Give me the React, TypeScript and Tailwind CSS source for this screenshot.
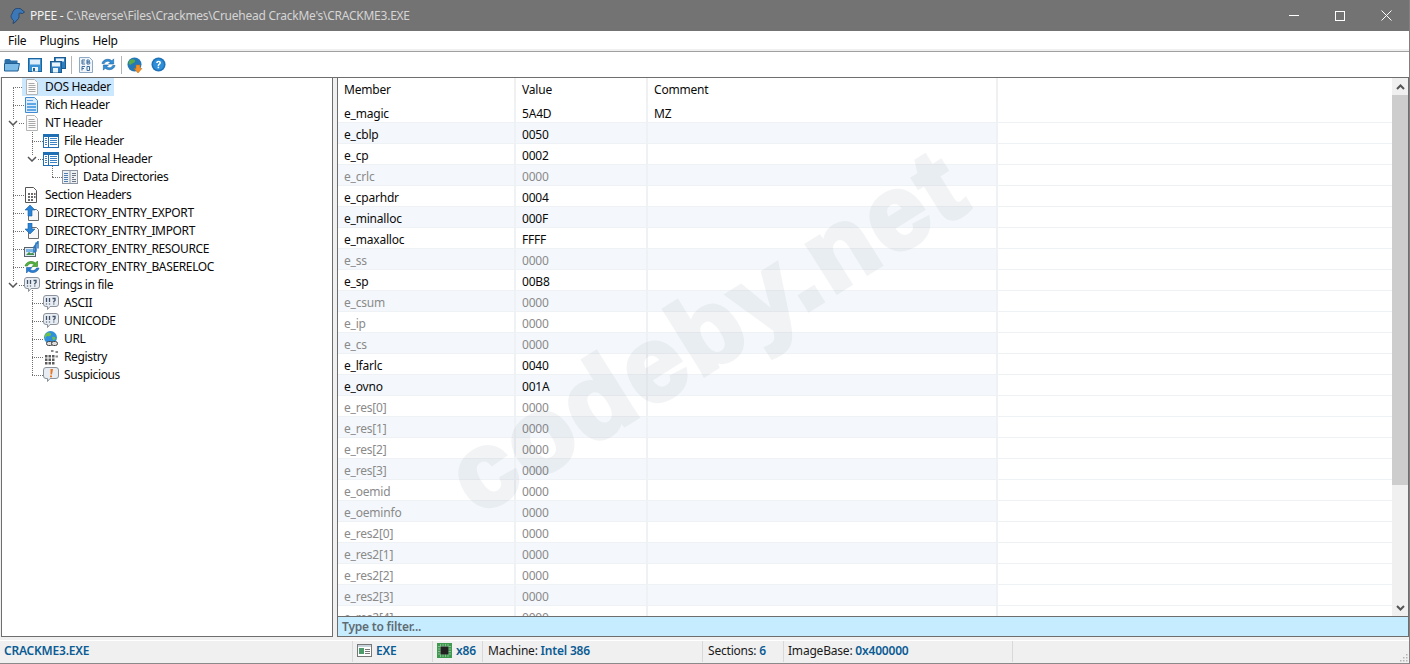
import type { ReactNode } from "react";

const font = "font-['Noto_Sans','Open_Sans',sans-serif]";

type IconName =
  | "page" | "rich" | "table" | "dirs" | "section" | "export" | "import"
  | "resource" | "reloc" | "strings" | "url" | "registry" | "suspicious";

const TreeIcon = ({ name }: { name: IconName }) => {
  switch (name) {
    case "page":
      return (
        <svg width="16" height="16" viewBox="0 0 16 16">
          <path d="M2.500.5h8l3 3v12h-11z" fill="#fbfbfb" stroke="#b4b4b4" />
          <path d="M4.500 4.500h6M4.500 6.500h7M4.500 8.500h7M4.500 10.500h7M4.500 12.500h7" stroke="#a9a9a9" />
        </svg>
      );
    case "rich":
      return (
        <svg width="16" height="16" viewBox="0 0 16 16">
          <path d="M1.500.5h9l3 3v12h-12z" fill="#dcecfa" stroke="#3f8ad0" />
          <path d="M3 6h9v2H3zM3 9h9v2H3zM3 12h9v2H3z" fill="#5ea6e4" />
          <path d="M3 3.500h6" stroke="#5ea6e4" />
        </svg>
      );
    case "table":
      return (
        <svg width="16" height="16" viewBox="0 0 16 16">
          <rect x=".5" y="1.500" width="15" height="13" fill="#fff" stroke="#1f6fb5" />
          <path d="M.5 3h15" stroke="#1f6fb5" strokeWidth="2" />
          <path d="M5.500 2v12" stroke="#1f6fb5" />
          <path d="M2 5.500h2M2 7.500h2M2 9.500h2M2 11.500h2M7 5.500h7M7 7.500h7M7 9.500h7M7 11.500h7" stroke="#3b83c4" />
        </svg>
      );
    case "dirs":
      return (
        <svg width="16" height="16" viewBox="0 0 16 16">
          <rect x=".5" y="1.500" width="15" height="13" fill="#eef1f4" stroke="#8d97a3" />
          <path d="M8 2v12" stroke="#8d97a3" />
          <path d="M2 4.500h4M2 6.500h4M2 8.500h4M2 10.500h4M2 12.500h4" stroke="#4e7fb0" />
          <path d="M10 4.500h4M10 6.500h4M10 8.500h2M10 10.500h4M10 12.500h4" stroke="#6b7480" />
        </svg>
      );
    case "section":
      return (
        <svg width="16" height="16" viewBox="0 0 16 16">
          <path d="M1.500.5h8l3 3v12h-11z" fill="#fff" stroke="#555" />
          <path d="M4 6h2v2H4zM7 6h2v2H7zM10 6h1.500v2H10zM4 9h2v2H4zM7 9h2v2H7zM10 9h1.500v2H10zM4 12h2v2H4zM7 12h2v2H7z" fill="#6a6a6a" />
        </svg>
      );
    case "export":
    case "import":
      return (
        <svg width="16" height="16" viewBox="0 0 16 16">
          <path d="M4.500 4.500h8l2 2v9h-10z" fill="#f7f7f7" stroke="#6d6d6d" />
          <path
            d={name === "export" ? "M6 0 1 5h3v6h4V5h3z" : "M4 0h4v6h3l-5 5-5-5h3z"}
            fill="#2b83d6"
            stroke="#1a5fa3"
            strokeWidth=".6"
          />
        </svg>
      );
    case "resource":
      return (
        <svg width="16" height="16" viewBox="0 0 16 16">
          <rect x=".5" y="6.500" width="11" height="9" fill="#dfeaf3" stroke="#58636e" />
          <rect x="2" y="8" width="8" height="3" fill="#7fb6e6" />
          <path d="M2 14l3-3 2 1.500 1.500-1 1.500 1.500v1z" fill="#3f8f4d" />
          <path d="M12 1.500v8.500l-2 1V6l4-5.500v7" fill="none" stroke="#2b78c2" strokeWidth="1.500" />
        </svg>
      );
    case "reloc":
      return (
        <svg width="16" height="16" viewBox="0 0 16 16">
          <path d="M1 7C2 2.500 8 1 11.500 4L13.500 2v5.500H8l2-2C7.500 3.800 4.500 4.500 3.500 7z" fill="#53b13d" stroke="#2f7c22" strokeWidth=".6" />
          <path d="M15 9c-1 4.500-7 6-10.500 3L2.500 14V8.500H8l-2 2c2.500 1.700 5.500 1 6.500-1.500z" fill="#2a7fd4" stroke="#185a9e" strokeWidth=".6" />
        </svg>
      );
    case "strings":
      return (
        <svg width="16" height="16" viewBox="0 0 16 16">
          <path d="M3 .5h10a2.500 2.500 0 0 1 2.500 2.500v6a2.500 2.500 0 0 1-2.500 2.500H7l-2.500 3v-3H3A2.500 2.500 0 0 1 .5 9V3A2.500 2.500 0 0 1 3 .5z" fill="#e8edf3" stroke="#8b929b" />
          <path d="M3.500 3v4M6.500 3v4M3.500 8.500v1M6.500 8.500v1M9.500 3.500h2.500v2l-1.200 1v1M10.800 8.500v1" fill="none" stroke="#3f5068" strokeWidth="1.300" />
        </svg>
      );
    case "url":
      return (
        <svg width="16" height="16" viewBox="0 0 16 16">
          <circle cx="7.500" cy="6.500" r="6.500" fill="#2f8fdc" />
          <path d="M4 2c2-1 4 0 4 1.500S6 5.500 5 5 2 6 2.500 8C1 6 2 3 4 2zM9 6c2-.5 4 0 3.500 2L10 9.500z" fill="#6dc04a" />
          <rect x="3.500" y="10.500" width="6" height="4" rx="2" fill="#ddd" stroke="#444" />
          <rect x="8.500" y="10.500" width="6" height="4" rx="2" fill="#ddd" stroke="#444" />
        </svg>
      );
    case "registry":
      return (
        <svg width="16" height="16" viewBox="0 0 16 16">
          <path d="M2 6h2.500v2.500H2zM5.500 6H8v2.500H5.500zM9 6h2.500v2.500H9zM2 9.500h2.500V12H2zM5.500 9.500H8V12H5.500zM9 9.500h2.500V12H9zM2 13h2.500v2.500H2zM5.500 13H8v2.500H5.500zM9 13h2.500v2.500H9z" fill="#5d5d5d" />
          <path d="M8 1h2.500v2H8zM12.500 2H15v2h-2.500zM12.500 6.500H15v2h-2.500z" fill="#8b8b8b" />
        </svg>
      );
    case "suspicious":
      return (
        <svg width="16" height="16" viewBox="0 0 16 16">
          <path d="M3 .5h10a2.500 2.500 0 0 1 2.500 2.500v6a2.500 2.500 0 0 1-2.500 2.500H7l-2.500 3v-3H3A2.500 2.500 0 0 1 .5 9V3A2.500 2.500 0 0 1 3 .5z" fill="#e8edf3" stroke="#8b929b" />
          <path d="M7.500 2h2.500L9 7.500H7.500zM7 8.500h2v1.800H7z" fill="#e8761e" />
        </svg>
      );
  }
};

type TreeItem = { label: string; icon: IconName; depth: number; open?: boolean };

const treeItems: TreeItem[] = [
  { label: "DOS Header", icon: "page", depth: 0 },
  { label: "Rich Header", icon: "rich", depth: 0 },
  { label: "NT Header", icon: "page", depth: 0, open: true },
  { label: "File Header", icon: "table", depth: 1 },
  { label: "Optional Header", icon: "table", depth: 1, open: true },
  { label: "Data Directories", icon: "dirs", depth: 2 },
  { label: "Section Headers", icon: "section", depth: 0 },
  { label: "DIRECTORY_ENTRY_EXPORT", icon: "export", depth: 0 },
  { label: "DIRECTORY_ENTRY_IMPORT", icon: "import", depth: 0 },
  { label: "DIRECTORY_ENTRY_RESOURCE", icon: "resource", depth: 0 },
  { label: "DIRECTORY_ENTRY_BASERELOC", icon: "reloc", depth: 0 },
  { label: "Strings in file", icon: "strings", depth: 0, open: true },
  { label: "ASCII", icon: "strings", depth: 1 },
  { label: "UNICODE", icon: "strings", depth: 1 },
  { label: "URL", icon: "url", depth: 1 },
  { label: "Registry", icon: "registry", depth: 1 },
  { label: "Suspicious", icon: "suspicious", depth: 1 },
];

const rows: [string, string, boolean][] = [
  ["e_magic", "5A4D", true],
  ["e_cblp", "0050", true],
  ["e_cp", "0002", true],
  ["e_crlc", "0000", false],
  ["e_cparhdr", "0004", true],
  ["e_minalloc", "000F", true],
  ["e_maxalloc", "FFFF", true],
  ["e_ss", "0000", false],
  ["e_sp", "00B8", true],
  ["e_csum", "0000", false],
  ["e_ip", "0000", false],
  ["e_cs", "0000", false],
  ["e_lfarlc", "0040", true],
  ["e_ovno", "001A", true],
  ["e_res[0]", "0000", false],
  ["e_res[1]", "0000", false],
  ["e_res[2]", "0000", false],
  ["e_res[3]", "0000", false],
  ["e_oemid", "0000", false],
  ["e_oeminfo", "0000", false],
  ["e_res2[0]", "0000", false],
  ["e_res2[1]", "0000", false],
  ["e_res2[2]", "0000", false],
  ["e_res2[3]", "0000", false],
  ["e_res2[4]", "0000", false],
];

const ToolButton = ({ className, children }: { className: string; children: ReactNode }) => (
  <div className={`h-[24px] flex items-center justify-center ${className}`}>{children}</div>
);

const Toolbar = () => (
  <div className="h-[25px] bg-white flex items-center pl-[1px] shrink-0">
    <ToolButton className="w-[22px]">
      <svg width="16" height="14" viewBox="0 0 16 14">
        <path d="M.5 2.500Q.5 1 2 1h3.500L7 2.500h6.500V5H.5z" fill="#2a6fa8" />
        <path d="M.5 13V5.500h15L14 13z" fill="#7dbce6" stroke="#1f5f94" />
      </svg>
    </ToolButton>
    <ToolButton className="w-[23px]">
      <svg width="14" height="14" viewBox="0 0 14 14">
        <rect x=".5" y=".5" width="13" height="13" fill="#3a93d4" stroke="#1d639c" />
        <rect x="2" y="1.500" width="10" height="5" fill="#dcecf8" />
        <rect x="4" y="9" width="6" height="4.500" fill="#eef5fa" />
        <rect x="5" y="10" width="2" height="3" fill="#1d639c" />
      </svg>
    </ToolButton>
    <ToolButton className="w-[24px]">
      <svg width="16" height="16" viewBox="0 0 16 16">
        <rect x="4.500" y=".5" width="11" height="11" fill="#2f7fc0" stroke="#1d5a8e" />
        <rect x="6" y="1.500" width="8" height="3" fill="#e9f3fa" />
        <rect x=".5" y="4.500" width="11" height="11" fill="#2f7fc0" stroke="#1d5a8e" />
        <rect x="2" y="5.500" width="8" height="4" fill="#e9f3fa" />
        <rect x="3" y="11" width="5" height="4.500" fill="#e9f3fa" />
      </svg>
    </ToolButton>
    <div className="w-px h-[18px] bg-[#b5b5b5] ml-[1px] mr-[2px]" />
    <ToolButton className="w-[23px]">
      <svg width="14" height="16" viewBox="0 0 14 16">
        <path d="M.5.5h10l3 3v12H.5z" fill="#f0f5fa" stroke="#8faac4" />
        <path d="M3 3h3M3 3v4M3 5h2.500M3 7h3M8 3v4h2a1 1 0 0 0 0-2H8h1.500a1 1 0 0 0 0-2zM3 9.500v4M3 9.500h3M3 11.500h2M8 9.500h2.500v4H8z" fill="none" stroke="#3e6f9e" />
      </svg>
    </ToolButton>
    <ToolButton className="w-[23px]">
      <svg width="15" height="15" viewBox="0 0 16 16">
        <path d="M1 7C2 2.500 8 1 11.500 4L13.500 2v5.500H8l2-2C7.500 3.800 4.500 4.500 3.500 7z" fill="#2f8fd8" stroke="#1b5e9c" strokeWidth=".6" />
        <path d="M15 9c-1 4.500-7 6-10.500 3L2.500 14V8.500H8l-2 2c2.500 1.700 5.500 1 6.500-1.500z" fill="#2f8fd8" stroke="#1b5e9c" strokeWidth=".6" />
      </svg>
    </ToolButton>
    <div className="w-px h-[18px] bg-[#b5b5b5] ml-[1px] mr-[1px]" />
    <ToolButton className="w-[23px]">
      <svg width="16" height="16" viewBox="0 0 16 16">
        <circle cx="7.500" cy="7.500" r="7" fill="#2478b8" />
        <path d="M3 3c2-1.500 5-1 5 1S5 6 4.500 7 2.500 8 2 7C1.500 6 2 4 3 3z" fill="#58a94a" />
        <path d="M9 8h4v3.500h2L11 16l-4-4.500h2z" fill="#f0902a" stroke="#c06a15" strokeWidth=".5" />
      </svg>
    </ToolButton>
    <ToolButton className="w-[24px]">
      <svg width="15" height="15" viewBox="0 0 16 16">
        <circle cx="8" cy="8" r="7.500" fill="#1f72b8" />
        <circle cx="8" cy="8" r="5.800" fill="#2f8fd8" />
        <path d="M5.500 6.300C5.500 4.800 6.700 4 8.100 4c1.500 0 2.500.9 2.500 2.100 0 1.800-2 1.800-2 3.400H7c0-2.400 1.900-2.300 1.900-3.400 0-.5-.3-.8-.8-.8-.6 0-.9.4-.9 1z" fill="#fff" />
        <rect x="7" y="10.300" width="1.700" height="1.700" fill="#fff" />
      </svg>
    </ToolButton>
  </div>
);

const TreeRow = ({ item, index }: { item: TreeItem; index: number }) => {
  const indent = item.depth === 0 ? "pl-[20px]" : item.depth === 1 ? "pl-[39px]" : "pl-[58px]";
  const chevron = item.depth === 0 ? "left-[6px]" : "left-[25px]";
  const dots = item.depth === 0 ? "left-[11px] w-[11px]" : item.depth === 1 ? "left-[30px] w-[11px]" : "left-[50px] w-[10px]";
  return (
    <div className={`relative h-[18px] flex items-center ${indent}`}>
      <div className={`absolute top-[9px] h-px border-t border-dotted border-[#707070] ${dots}`} />
      {item.open && (
        <svg className={`absolute top-[6px] ${chevron} bg-white`} width="10" height="6" viewBox="0 0 10 6">
          <path d="M1 1l4 4 4-4" fill="none" stroke="#555" strokeWidth="1.500" />
        </svg>
      )}
      <div className={`relative h-[18px] flex items-center pl-[2px] pr-[3px] ${index === 0 ? "bg-[#cce8ff]" : ""}`}>
        <div className="shrink-0 w-[16px] h-[16px]">
          <TreeIcon name={item.icon} />
        </div>
        <span className="ml-[5px] leading-[18px] whitespace-nowrap tracking-[-0.35px] text-[#0a0a0a]">{item.label}</span>
      </div>
    </div>
  );
};

const Tree = () => (
  <div className="relative w-[332px] shrink-0 border-x border-b border-[#6e6e6e] bg-white overflow-hidden">
    {/* dotted guide lines */}
    <div className="absolute left-[11px] top-[9px] h-[198px] border-l border-dotted border-[#707070]" />
    <div className="absolute left-[30px] top-[45px] h-[36px] border-l border-dotted border-[#707070]" />
    <div className="absolute left-[50px] top-[81px] h-[18px] border-l border-dotted border-[#707070]" />
    <div className="absolute left-[30px] top-[207px] h-[90px] border-l border-dotted border-[#707070]" />
    {treeItems.map((item, i) => (
      <TreeRow key={item.label} item={item} index={i} />
    ))}
  </div>
);

const cellBase = "px-[6px] pt-[4px] flex items-center whitespace-nowrap";

const Grid = () => (
  <div className="relative flex-1 overflow-hidden flex">
    <div className="flex-1 overflow-hidden">
      <div className="h-[24px] flex bg-white">
        <div className="px-[6px] flex items-center w-[178px] border-r-2 border-[#f0f0f0]">Member</div>
        <div className="px-[6px] flex items-center w-[132px] border-r-2 border-[#f0f0f0]">Value</div>
        <div className="px-[6px] flex items-center w-[350px] border-r-2 border-[#f0f0f0]">Comment</div>
      </div>
      {rows.map(([member, value, strong], i) => {
        const text = strong ? "text-[#0a0a0a]" : "text-[#8a8a8a]";
        const alt = i % 2 === 1 ? "bg-[#f4f8fc]" : "bg-white";
        return (
          <div key={member} className="h-[21px] flex">
            <div className={`${cellBase} ${text} ${alt} w-[178px] border-r-2 border-b border-[#eff2f5]`}>{member}</div>
            <div className={`${cellBase} ${text} ${alt} w-[132px] border-r-2 border-b border-[#eff2f5]`}>{value}</div>
            <div className={`${cellBase} ${alt} w-[350px] border-r-2 border-b border-[#eff2f5]`}>{i === 0 ? "MZ" : ""}</div>
            <div className="w-[394px] border-b border-[#eff2f5] bg-white" />
          </div>
        );
      })}
    </div>
    {/* scrollbar */}
    <div className="w-[16px] shrink-0 bg-[#f0f0f0] flex flex-col">
      <div className="h-[17px] flex items-center justify-center">
        <svg width="9" height="6" viewBox="0 0 9 6">
          <path d="M1 5l3.500-3.500L8 5" fill="none" stroke="#555" strokeWidth="2" />
        </svg>
      </div>
      <div className="h-[390px] bg-[#cdcdcd]" />
      <div className="flex-1" />
      <div className="h-[17px] flex items-center justify-center">
        <svg width="9" height="6" viewBox="0 0 9 6">
          <path d="M1 1l3.500 3.500L8 1" fill="none" stroke="#555" strokeWidth="2" />
        </svg>
      </div>
    </div>
    {/* watermark */}
    <div className="absolute left-[369px] top-[252px] -translate-x-1/2 -translate-y-1/2 pointer-events-none -rotate-[32deg] opacity-[0.055] font-['Liberation_Sans',sans-serif] font-bold text-[105px] leading-none tracking-[4px] text-[#2f4060] [-webkit-text-stroke:5px_#2f4060] whitespace-nowrap">
      codeby.net
    </div>
  </div>
);

const StatusCell = ({ className, children }: { className: string; children: ReactNode }) => (
  <div className={`h-[21px] pb-[2px] flex items-center border-r border-[#d9d9d9] whitespace-nowrap shrink-0 ${className}`}>{children}</div>
);

const StatusBar = () => (
  <div className="relative h-[24px] mt-[3px] bg-[#f0f0f0] border-t border-white border-b border-b-[#8a8a8a] flex items-start text-[#1a1a1a] shrink-0">
    <StatusCell className="w-[353px] pl-[4px] text-[#0b5c94] font-semibold">CRACKME3.EXE</StatusCell>
    <StatusCell className="w-[80px] pl-[4px] gap-[4px] text-[#0b5c94] font-semibold">
      <svg width="15" height="13" viewBox="0 0 15 13">
        <rect x=".5" y=".5" width="14" height="12" fill="#fff" stroke="#777" />
        <rect x="1" y="1" width="13" height="2" fill="#c9d3dc" />
        <rect x="2" y="4" width="5" height="6" fill="#4d9a6a" />
        <path d="M8 5.500h5M8 7.500h5M8 9.500h5" stroke="#777" />
      </svg>
      EXE
    </StatusCell>
    <StatusCell className="w-[50px] pl-[4px] gap-[4px] text-[#0b5c94] font-semibold">
      <svg width="15" height="15" viewBox="0 0 15 15">
        <rect width="15" height="15" fill="#3f9a4f" />
        <path d="M1 3.500h13M1 6h13M1 8.500h13M1 11h13M3.500 1v13M6 1v13M8.500 1v13M11 1v13" stroke="#cfe8d4" strokeWidth=".5" />
        <rect x="3.500" y="3.500" width="8" height="8" fill="#222" />
      </svg>
      x86
    </StatusCell>
    <StatusCell className="w-[220px] pl-[5px]">
      Machine:&nbsp;<span className="text-[#0b5c94] font-semibold">Intel 386</span>
    </StatusCell>
    <StatusCell className="w-[81px] pl-[5px]">
      Sections:&nbsp;<span className="text-[#0b5c94] font-semibold">6</span>
    </StatusCell>
    <StatusCell className="w-[229px] pl-[4px]">
      ImageBase:&nbsp;<span className="text-[#0b5c94] font-semibold">0x400000</span>
    </StatusCell>
    <svg className="absolute right-[1px] bottom-[1px]" width="10" height="10" viewBox="0 0 10 10">
      <path d="M8 2h1.500v1.500H8zM5 5h1.500v1.500H5zM8 5h1.500v1.500H8zM2 8h1.500v1.500H2zM5 8h1.500v1.500H5zM8 8h1.500v1.500H8z" fill="#b5b5b5" />
    </svg>
  </div>
);

export default function App() {
  return (
    <div className={`w-[1410px] h-[664px] flex flex-col overflow-hidden bg-[#f0f0f0] border-r border-[#808080] text-[12px] tracking-[-0.2px] text-[#0a0a0a] ${font}`}>
      {/* title bar */}
      <div className="h-[31px] bg-[#737373] flex items-center shrink-0">
        <svg className="ml-[10px] mr-[5px]" width="15" height="16" viewBox="0 0 15 16">
          <path d="M5 1c2-1 6-1 7 1l2.500 2-2 1.500-3-.5C8 6 10 8 8.500 10.500 8 12 6 12 5.500 14L3 15.500l.5-3C1.500 11 0 8 2 6c.5-2 1.500-4 3-5z" fill="#3c78b8" stroke="#1d3f66" strokeWidth=".8" />
        </svg>
        <span className="text-[#f2f2f2] tracking-[-0.25px] whitespace-nowrap">
          PPEE - <span className="text-[#d5d5d5]">C:\Reverse\Files\Crackmes\Cruehead CrackMe's\CRACKME3.EXE</span>
        </span>
        <div className="ml-auto flex items-center">
          <div className="w-[46px] h-[31px] flex items-center justify-center">
            <div className="w-[10px] h-px bg-white" />
          </div>
          <div className="w-[46px] h-[31px] flex items-center justify-center">
            <div className="w-[10px] h-[10px] border border-white" />
          </div>
          <div className="w-[46px] h-[31px] flex items-center justify-center">
            <svg width="11" height="11" viewBox="0 0 11 11">
              <path d="M.5.5l10 10M10.500.5l-10 10" stroke="#fff" />
            </svg>
          </div>
        </div>
      </div>
      {/* menu */}
      <div className="h-[18px] pt-[2px] bg-white flex items-center pl-[8px] gap-[13px] shrink-0">
        <span>File</span>
        <span>Plugins</span>
        <span>Help</span>
      </div>
      <div className="h-[2px] bg-[#f0f0f0] shrink-0" />
      <div className="h-px bg-[#a0a0a0] shrink-0" />
      <Toolbar />
      {/* panes */}
      <div className="flex-1 min-h-0 ml-px flex gap-[4px] border-t border-[#6e6e6e]">
        <Tree />
        <div className="flex-1 min-w-0 flex flex-col border-x border-b border-[#6e6e6e] bg-white">
          <Grid />
          <div className="h-[20px] bg-[#c6edff] border-t border-[#6e6e6e] flex items-center pl-[4px] font-semibold text-[#5f6b73] shrink-0">
            Type to filter...
          </div>
        </div>
      </div>
      <StatusBar />
    </div>
  );
}
